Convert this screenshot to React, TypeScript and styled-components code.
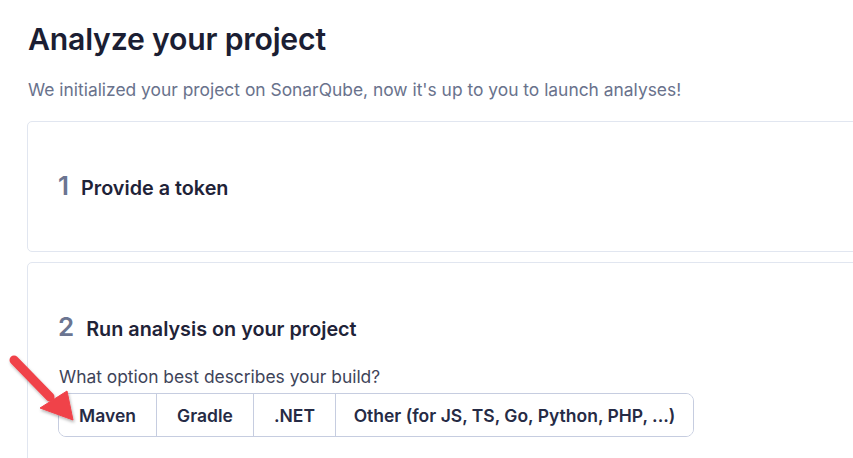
import styled, { createGlobalStyle } from "styled-components";

const GlobalStyle = createGlobalStyle`
  body {
    margin: 0;
    background: #ffffff;
    font-family: Inter, "Noto Sans", sans-serif;
    overflow: hidden;
  }
`;

const Page = styled.div`
  position: relative;
  padding: 22px 0 0 27px;
  width: 853px;
  height: 458px;
  box-sizing: border-box;
  overflow: hidden;
`;

const Title = styled.h1`
  margin: 0 0 0 1px;
  font-size: 30.2px;
  line-height: 34px;
  font-weight: 600;
  color: #1b1e33;
  letter-spacing: -0.2px;
`;

const Subtitle = styled.p`
  margin: 22px 0 19px 1px;
  font-size: 17.4px;
  line-height: 24px;
  color: #69728c;
`;

const Card = styled.section<{ $height: number }>`
  width: 880px;
  height: ${(p) => p.$height}px;
  box-sizing: border-box;
  border: 1px solid #e1e6f0;
  border-radius: 5px;
  margin-bottom: 10px;
  padding: 0 0 0 30px;
  display: flex;
  flex-direction: column;
  justify-content: flex-start;
`;

const StepRow = styled.div<{ $top: number }>`
  display: flex;
  align-items: baseline;
  gap: 12px;
  margin-top: ${(p) => p.$top}px;
`;

const StepNum = styled.span`
  font-size: 26px;
  font-weight: 600;
  color: #6b7591;
  line-height: 30px;
`;

const StepTitle = styled.h2`
  margin: 0;
  font-size: 19.8px;
  font-weight: 600;
  color: #1f2338;
  line-height: 30px;
`;

const Question = styled.p`
  margin: 22px 0 5px 1px;
  font-size: 17.4px;
  line-height: 22px;
  color: #3e4459;
`;

const ToggleGroup = styled.div`
  display: inline-flex;
  align-self: flex-start;
  border: 1px solid #c6cde0;
  border-radius: 8px;
  overflow: hidden;
`;

const ToggleButton = styled.button<{ $width: number }>`
  width: ${(p) => p.$width}px;
  height: 42px;
  border: none;
  border-left: 1px solid #c6cde0;
  background: #ffffff;
  font-family: Inter, "Noto Sans", sans-serif;
  font-size: 17.5px;
  font-weight: 600;
  color: #262b45;
  padding: 0;
  &:first-child {
    border-left: none;
  }
`;

const Arrow = styled.svg`
  position: absolute;
  left: 6px;
  top: 350px;
`;

const options = [
  { label: "Maven", width: 97 },
  { label: "Gradle", width: 97 },
  { label: ".NET", width: 82 },
  { label: "Other (for JS, TS, Go, Python, PHP, ...)", width: 358 },
];

export default function App() {
  return (
    <Page>
      <GlobalStyle />
      <Title>Analyze your project</Title>
      <Subtitle>
        We initialized your project on SonarQube, now it's up to you to launch analyses!
      </Subtitle>
      <Card $height={131}>
        <StepRow $top={49}>
          <StepNum>1</StepNum>
          <StepTitle>Provide a token</StepTitle>
        </StepRow>
      </Card>
      <Card $height={220}>
        <StepRow $top={49}>
          <StepNum>2</StepNum>
          <StepTitle>Run analysis on your project</StepTitle>
        </StepRow>
        <Question>What option best describes your build?</Question>
        <ToggleGroup>
          {options.map((o) => (
            <ToggleButton key={o.label} $width={o.width}>
              {o.label}
            </ToggleButton>
          ))}
        </ToggleGroup>
      </Card>
      <Arrow width="80" height="80" viewBox="0 0 80 80">
        <defs>
          <filter id="sh" x="-20%" y="-20%" width="140%" height="140%">
            <feDropShadow dx="1" dy="2" stdDeviation="1.5" floodColor="#000" floodOpacity="0.3" />
          </filter>
        </defs>
        <g filter="url(#sh)">
          <line x1="8" y1="10" x2="44" y2="47" stroke="#f0424a" strokeWidth="9" strokeLinecap="round" />
          <polygon points="67,70 34,58 61,41" fill="#f0424a" strokeLinejoin="round" stroke="#f0424a" strokeWidth="1" />
        </g>
      </Arrow>
    </Page>
  );
}
